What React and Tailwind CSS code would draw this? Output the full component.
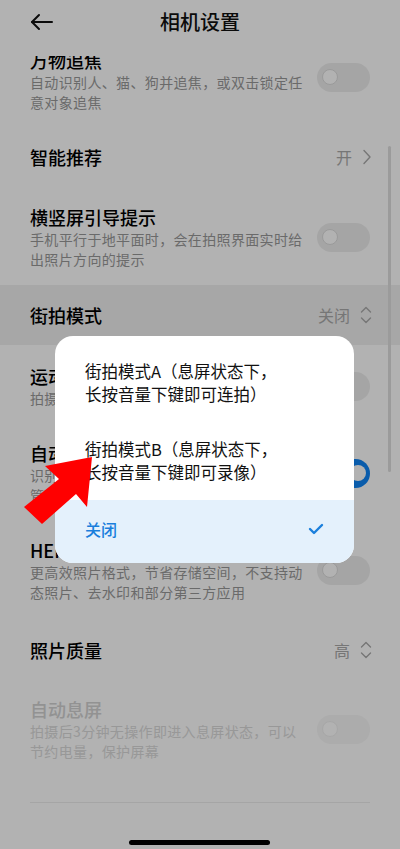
const font = { fontFamily: '"Noto Sans CJK SC", "Noto Sans", sans-serif' };

const Toggle = ({ on = false, faded = false, className = '' }) => (
    <div className={`w-[53px] h-[29px] rounded-full flex items-center shrink-0 px-[5px] ${on ? 'bg-[#0f84f5] justify-end' : faded ? 'bg-[#f6f6f6]' : 'bg-[#ededed]'} ${className}`}>
        <div className={`w-[16px] h-[16px] rounded-full bg-white ${on ? 'mr-[-1px]' : faded ? 'border border-[#f0f0f0]' : 'border border-[#dcdcdc]'}`}></div>
    </div>
);

const UpDown = () => (
    <svg width="12" height="20" viewBox="0 0 12 20" fill="none" stroke="#aaaaaa" strokeWidth="1.4" strokeLinecap="round" strokeLinejoin="round">
        <path d="M1.5 7 L6 2.5 L10.5 7" />
        <path d="M1.5 13 L6 17.5 L10.5 13" />
    </svg>
);

const Chevron = () => (
    <svg width="10" height="16" viewBox="0 0 10 16" fill="none" stroke="#aaaaaa" strokeWidth="1.4" strokeLinecap="round" strokeLinejoin="round">
        <path d="M2 1.5 L8 8 L2 14.5" />
    </svg>
);

const SwitchRow = ({ title, desc, on, faded, toggleClass = '', className = '' }) => (
    <div className={`flex items-center justify-between pl-[30px] pr-[30px] ${className}`}>
        <div className="w-[276px]">
            <div className={`text-[18px] leading-[24px] font-medium ${faded ? 'text-[#d2d2d2]' : 'text-black'}`}>{title}</div>
            <div className={`text-[14px] leading-[20px] tracking-[0.35px] ${faded ? 'text-[#dadada]' : 'text-[#999999]'}`}>{desc}</div>
        </div>
        <Toggle on={on} faded={faded} className={toggleClass} />
    </div>
);

const ValueRow = ({ title, value, icon, className = '' }) => (
    <div className={`flex items-center justify-between pl-[30px] pr-[28px] ${className}`}>
        <div className="text-[18px] leading-[24px] font-medium text-black">{title}</div>
        <div className="flex items-center gap-[10px] text-[16px] leading-[24px] text-[#aaaaaa]">
            <span>{value}</span>
            {icon}
        </div>
    </div>
);

export default function App() {
    return (
        <div className="relative w-[400px] h-[849px] overflow-hidden bg-white" style={font}>
            <header className="relative h-[56px] flex items-center justify-center bg-white z-10">
                <svg className="absolute left-[29px] top-[13px]" width="26" height="20" viewBox="0 0 26 20" fill="none" stroke="#111" strokeWidth="2" strokeLinecap="round" strokeLinejoin="round">
                    <path d="M3 9 H23" />
                    <path d="M10 2 L3 9 L10 16" />
                </svg>
                <h1 className="text-[20px] font-medium text-[#111] mb-[12px]">相机设置</h1>
            </header>

            <div className="h-[793px] overflow-hidden">
                <div className="mt-[-8px]">
                    <SwitchRow title="万物追焦" desc="自动识别人、猫、狗并追焦，或双击锁定任意对象追焦" toggleClass="mt-[-6px]" />
                    <ValueRow title="智能推荐" value="开" icon={<Chevron />} className="mt-[33px]" />
                    <SwitchRow title="横竖屏引导提示" desc="手机平行于地平面时，会在拍照界面实时给出照片方向的提示" className="mt-[36px]" />
                    <ValueRow title="街拍模式" value="关闭" icon={<UpDown />} className="mt-[16px] h-[60px] bg-[#efefef]" />
                    <SwitchRow title="运动抓拍" desc="拍摄运动物体时更清晰" className="mt-[19px]" />
                    <SwitchRow title="自动夜景" desc="识别场景后智能优化画面效果，可在设置中管理相关功能" on className="mt-[33px]" />
                    <SwitchRow title="HEIF格式" desc="更高效照片格式，节省存储空间，不支持动态照片、去水印和部分第三方应用" className="mt-[33px]" />
                    <ValueRow title="照片质量" value="高" icon={<UpDown />} className="mt-[36px]" />
                    <SwitchRow title="自动息屏" desc="拍摄后3分钟无操作即进入息屏状态，可以节约电量，保护屏幕" faded className="mt-[35px]" />
                    <div className="mx-[30px] mt-[41px] h-px bg-[#ececec]"></div>
                </div>
            </div>

            <div className="absolute left-[388px] top-[146px] w-[3px] h-[326px] rounded-full bg-[#dedede]"></div>

            <div className="absolute inset-0 bg-black/30 z-20">
                <div className="absolute left-[55px] top-[336px] w-[299px] rounded-[18px] bg-white overflow-hidden pt-[8px]">
                    <div className="px-[30px] py-[16px] text-[16.5px] leading-[23px] text-[#111]">
                        街拍模式A（息屏状态下，<br />长按音量下键即可连拍）
                    </div>
                    <div className="px-[30px] py-[16px] text-[16.5px] leading-[23px] text-[#111]">
                        街拍模式B（息屏状态下，<br />长按音量下键即可录像）
                    </div>
                    <div className="h-[63px] bg-[#e4f1fc] flex items-center justify-between pl-[30px] pr-[30px] pb-[5px]">
                        <span className="text-[16px] font-medium text-[#1a7fdc]">关闭</span>
                        <svg width="16" height="12" viewBox="0 0 16 12" fill="none" stroke="#1a7fdc" strokeWidth="2.4" strokeLinecap="round" strokeLinejoin="round">
                            <path d="M2 6 L6 10 L14 2" />
                        </svg>
                    </div>
                </div>
            </div>

            <svg className="absolute left-0 top-0 z-30" width="400" height="849" viewBox="0 0 400 849">
                <polygon points="92,457 45,466 59,479 24,507 42,524 76,494 87,507" fill="#ff0000" />
            </svg>

            <div className="absolute left-[129px] top-[840px] w-[141px] h-[5px] rounded-full bg-black z-30"></div>
        </div>
    );
}
